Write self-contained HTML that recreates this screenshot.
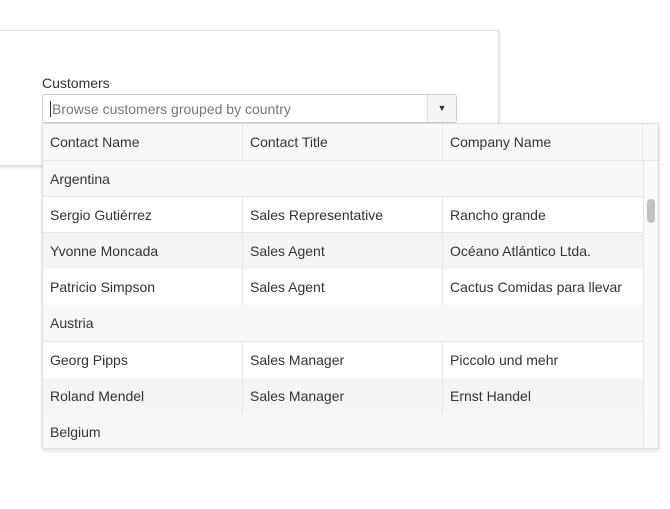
<!DOCTYPE html><html><head><style>
*{box-sizing:border-box;margin:0;padding:0}
body{width:670px;height:509px;background:#fff;font-family:"Liberation Sans",sans-serif;font-size:14px;color:#333;position:relative;overflow:hidden}
.panel{position:absolute;left:-2px;top:30px;width:501px;height:136px;border:1px solid #ddd;box-shadow:0 1px 4px rgba(0,0,0,.15);background:#fff}
.lbl{position:absolute;left:42px;top:75px}
.inp{position:absolute;left:42px;top:94px;width:415px;height:29px;border:1px solid #ccc;border-radius:3px;background:#fff}
.inp .ph{position:absolute;left:7px;top:6px;color:#777;border-left:1px solid #333;padding-left:1px}
.inp .btn{position:absolute;right:0;top:0;width:29px;height:27px;border-left:1px solid #ddd;background:#f5f5f5;font-size:9px;text-align:center;line-height:27px;color:#333}
.dd{position:absolute;left:42px;top:123px;width:617px;height:326px;border:1px solid #ddd;box-shadow:0 2px 4px rgba(0,0,0,.12);background:#fff;overflow:hidden}
.row{position:absolute;left:0;width:601px;height:36px;border-bottom:1px solid #e6e6e6}
.c{position:absolute;top:0;height:100%;padding-left:7px;line-height:37px}
.c2{left:199px;border-left:1px solid #e6e6e6}
.c3{left:399px;border-left:1px solid #e6e6e6}
.g{background:#f8f8f8;padding-left:7px;line-height:37px}
.alt{background:#f5f5f5;border-bottom:none}
.sb{position:absolute;left:600px;top:37px;width:16px;height:290px;border-left:1px solid #e6e6e6;background:#fafafa}
.th{position:absolute;left:604px;top:75px;width:8px;height:24px;border-radius:4px;background:#c1c1c1}
</style></head><body>
<div class="panel"></div>
<div class="lbl">Customers</div>
<div class="inp"><span class="ph">Browse customers grouped by country</span><div class="btn">▼</div></div>
<div class="dd">
<div class="row" style="top:0;height:37px;background:#f8f8f8;width:615px"><div class="c">Contact Name</div><div class="c c2">Contact Title</div><div class="c c3">Company Name</div><div class="c" style="left:599px;border-left:1px solid #e6e6e6"></div></div>
<div class="row g" style="top:37px">Argentina</div>
<div class="row" style="top:73px"><div class="c">Sergio Gutiérrez</div><div class="c c2">Sales Representative</div><div class="c c3">Rancho grande</div></div>
<div class="row alt" style="top:109px"><div class="c">Yvonne Moncada</div><div class="c c2">Sales Agent</div><div class="c c3">Océano Atlántico Ltda.</div></div>
<div class="row" style="top:145px;border-bottom:none"><div class="c">Patricio Simpson</div><div class="c c2">Sales Agent</div><div class="c c3">Cactus Comidas para llevar</div></div>
<div class="row g" style="top:181px;height:37px">Austria</div>
<div class="row" style="top:218px;border-bottom:none"><div class="c">Georg Pipps</div><div class="c c2">Sales Manager</div><div class="c c3">Piccolo und mehr</div></div>
<div class="row alt" style="top:254px"><div class="c">Roland Mendel</div><div class="c c2">Sales Manager</div><div class="c c3">Ernst Handel</div></div>
<div class="row g" style="top:290px;border-bottom:none">Belgium</div>
<div class="sb"></div><div class="th"></div>
</div>
</body></html>
